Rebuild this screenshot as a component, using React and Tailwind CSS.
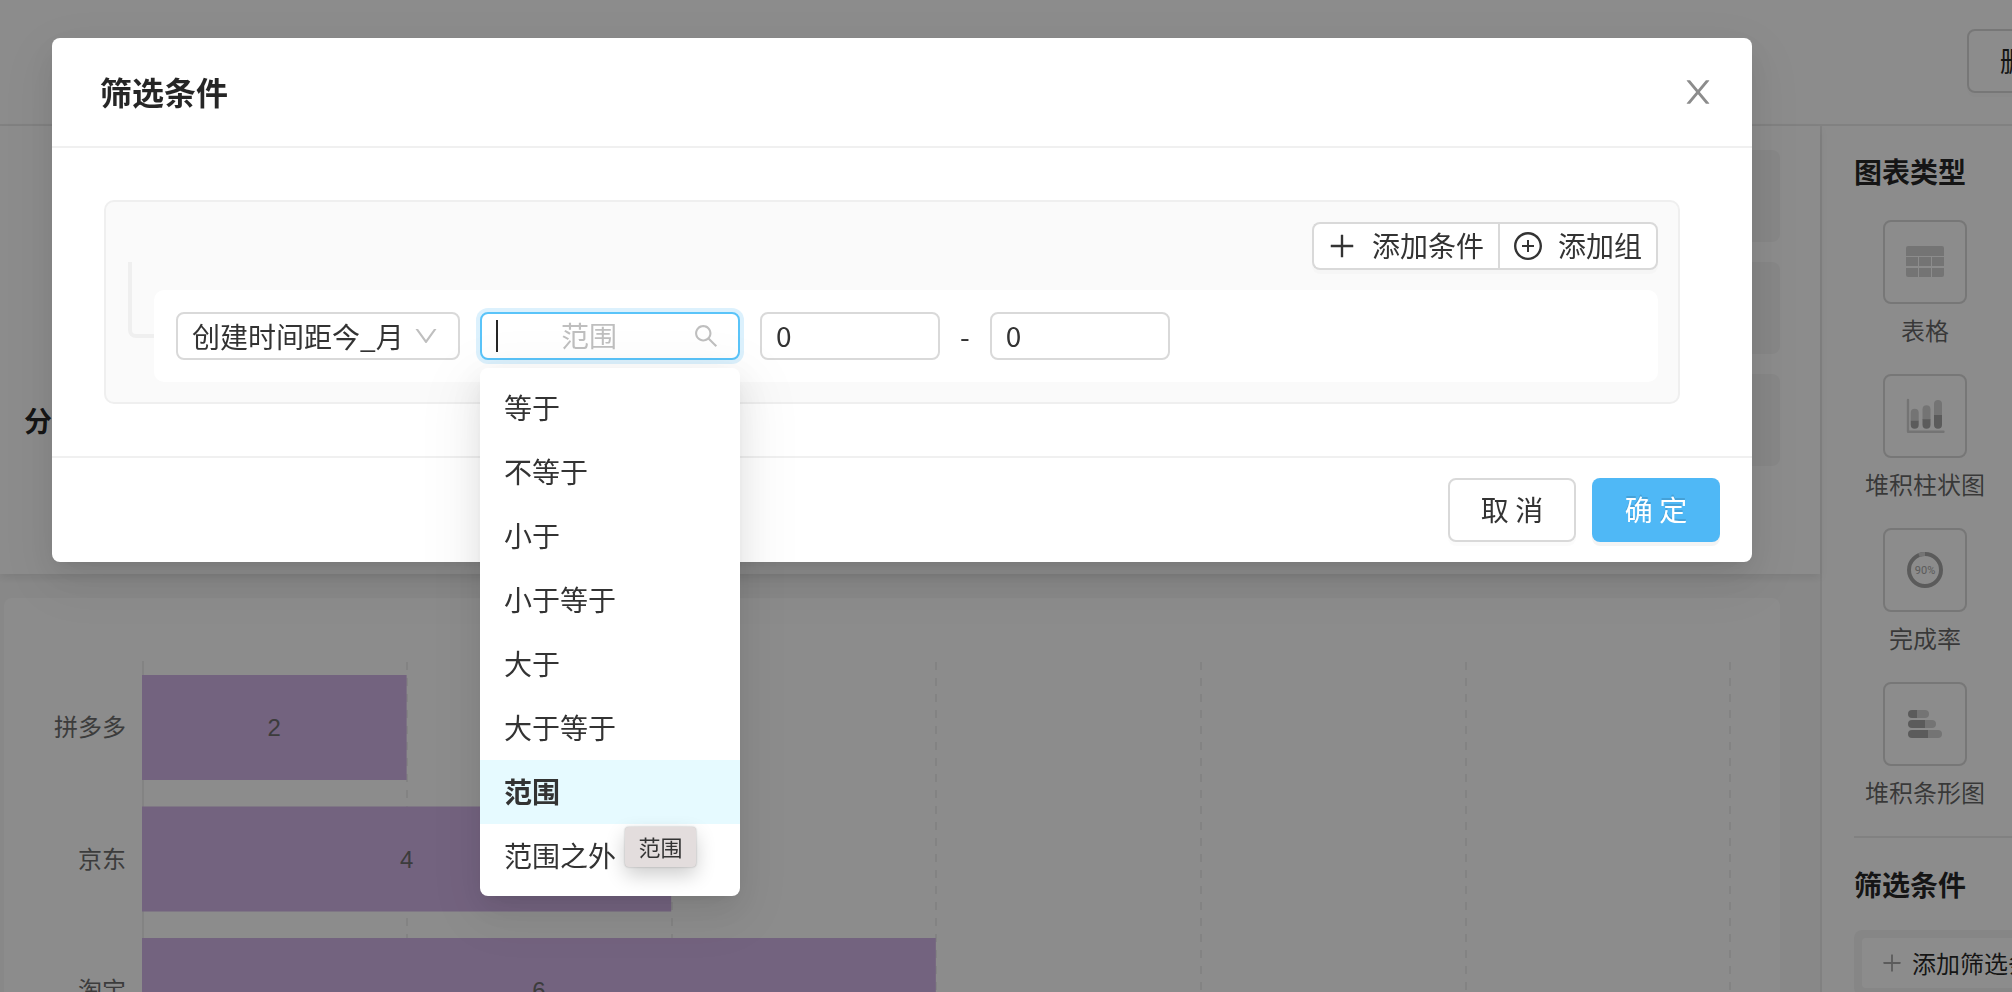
import React, { useState } from "react";
import {
  AiOutlineDown,
  AiOutlinePlus,
  AiOutlinePlusCircle,
  AiOutlineSearch,
} from "react-icons/ai";

const operators = [
  "等于",
  "不等于",
  "小于",
  "小于等于",
  "大于",
  "大于等于",
  "范围",
  "范围之外",
];

const chartData = [
  { name: "拼多多", value: 2 },
  { name: "京东", value: 4 },
  { name: "淘宝", value: 6 },
];

const popupShadow =
  "shadow-[0_6px_12px_-8px_rgba(0,0,0,0.12),0_12px_32px_0_rgba(0,0,0,0.08),0_18px_56px_16px_rgba(0,0,0,0.05)]";

function CloseIcon() {
  return (
    <svg width="32" height="32" viewBox="64 64 896 896" fill="currentColor">
      <path d="M563.8 512l262.5-312.9c4.4-5.2.7-13.1-6.1-13.1h-79.8c-4.7 0-9.2 2.1-12.3 5.7L511.6 449.8 295.1 191.7c-3-3.6-7.5-5.7-12.3-5.7H203c-6.8 0-10.5 7.9-6.1 13.1L459.4 512 196.9 824.9A7.95 7.95 0 0 0 203 838h79.8c4.7 0 9.2-2.1 12.3-5.7l216.5-258.1 216.5 258.1c3 3.6 7.5 5.7 12.3 5.7h79.8c6.8 0 10.5-7.9 6.1-13.1L563.8 512z" />
    </svg>
  );
}

function TableIcon() {
  return (
    <svg width="40" height="40" viewBox="0 0 40 40" fill="#d4d4d4">
      <path d="M3 4h34a2 2 0 0 1 2 2v8H1V6a2 2 0 0 1 2-2z" />
      <path d="M1 15h12v9H1zM14 15h12v9H14zM27 15h12v9H27z" />
      <path d="M1 26h12v9H3a2 2 0 0 1-2-2zM14 26h12v9H14zM27 26h12v7a2 2 0 0 1-2 2H27z" />
    </svg>
  );
}

function StackedColumnIcon() {
  return (
    <svg width="40" height="40" viewBox="0 0 40 40">
      <path
        d="M3 4v31.7h35.5"
        fill="none"
        stroke="#d4d4d4"
        strokeWidth="2.4"
        strokeLinecap="round"
        strokeLinejoin="round"
      />
      <g fill="#d4d4d4">
        <path d="M5.7 25v-8.3a4 4 0 0 1 8 0V25z" />
        <path d="M17.5 24V13.3a4 4 0 0 1 8 0V24z" />
        <path d="M29 19V8a4 4 0 0 1 8 0v11z" />
      </g>
      <g fill="#a6a6a6">
        <path d="M5.7 24.7h8v4a4 4 0 0 1-8 0z" />
        <path d="M17.5 23.3h8v5.4a4 4 0 0 1-8 0z" />
        <path d="M29 19h8v9.7a4 4 0 0 1-8 0z" />
      </g>
    </svg>
  );
}

function RateIcon() {
  return (
    <svg width="40" height="40" viewBox="0 0 40 40">
      <circle cx="20" cy="20" r="16" fill="none" stroke="#a6a6a6" strokeWidth="4" />
      <path d="M14 5.2A16 16 0 0 1 20 4" fill="none" stroke="#d4d4d4" strokeWidth="4" />
      <text
        x="20"
        y="24"
        textAnchor="middle"
        className="fill-[#a6a6a6] font-['Roboto',sans-serif] text-[11px]"
      >
        90%
      </text>
    </svg>
  );
}

function StackedBarIcon() {
  return (
    <svg width="40" height="40" viewBox="0 0 40 40">
      <g fill="#d4d4d4">
        <path d="M12 6h8a4 4 0 0 1 0 8h-8z" />
        <path d="M20 16h7a4 4 0 0 1 0 8h-7z" />
        <path d="M23 26h10a4 4 0 0 1 0 8H23z" />
      </g>
      <g fill="#a6a6a6">
        <path d="M12 6v8H7a4 4 0 0 1 0-8z" />
        <path d="M20 16v8H7a4 4 0 0 1 0-8z" />
        <path d="M23 26v8H7a4 4 0 0 1 0-8z" />
      </g>
    </svg>
  );
}

const chartTypes = [
  { name: "表格", icon: <TableIcon /> },
  { name: "堆积柱状图", icon: <StackedColumnIcon /> },
  { name: "完成率", icon: <RateIcon /> },
  { name: "堆积条形图", icon: <StackedBarIcon /> },
];

function BarChart() {
  const left = 138;
  const step = 264.6;
  return (
    <svg width="1776" height="500" className="block">
      <path d={`M${left + 1} 63V500`} stroke="#efefef" strokeWidth="2" />
      {[1, 2, 3, 4, 5, 6].map((n) => (
        <path
          key={n}
          d={`M${Math.floor(left + n * step) + 1} 64V500`}
          stroke="#efefef"
          strokeWidth="2"
          strokeDasharray="8 8"
        />
      ))}
      {chartData.map((item, index) => {
        const width = (item.value / 2) * step;
        const top = 77 + index * 131.5;
        return (
          <g key={item.name}>
            <rect x={left} y={top} width={width} height="105" fill="#d2b4e8" />
            <text
              x={left - 16}
              y={top + 61}
              textAnchor="end"
              className="fill-[#6e6e6e] text-2xl"
            >
              {item.name}
            </text>
            <text
              x={left + width / 2}
              y={top + 61}
              textAnchor="middle"
              className="fill-[#6e6e6e] font-['Liberation_Sans',sans-serif] text-2xl"
            >
              {item.value}
            </text>
          </g>
        );
      })}
    </svg>
  );
}

function ReportPage() {
  return (
    <div className="h-full flex flex-col bg-white">
      <header className="h-[126px] shrink-0 border-b-2 border-[#ececec] flex items-start pt-[29px]">
        <button className="ml-[calc(100%-45px)] w-32 h-16 shrink-0 border-2 border-[#d9d9d9] rounded-lg text-black/85 pb-0.5 shadow-[0_4px_0_rgba(0,0,0,0.015)]">
          删 除
        </button>
      </header>
      <div className="flex flex-1 min-h-0">
        <main className="w-[calc(100%-192px)] shrink-0 bg-[#f8f8f8] flex flex-col">
          <section className="h-[448px] shrink-0 relative bg-white pt-6 pr-10 pl-6 flex flex-col gap-5 shadow-[0_4px_8px_rgba(0,0,0,0.08)]">
            <div className="ml-32 h-[92px] rounded-lg bg-[#f5f5f5]"></div>
            <div className="ml-32 h-[92px] rounded-lg bg-[#f5f5f5]"></div>
            <div className="flex h-[92px] items-center">
              <h3 className="w-32 font-semibold text-black/85">分</h3>
              <div className="flex-1 h-full rounded-lg bg-[#f5f5f5]"></div>
            </div>
          </section>
          <section className="mt-6 ml-1 mr-10 flex-1 min-h-0 overflow-hidden rounded-t-lg bg-white">
            <BarChart />
          </section>
        </main>
        <aside className="w-[500px] shrink-0 border-l-2 border-[#ececec] pl-8 pt-6">
          <h2 className="h-11 leading-[42px] font-semibold text-black/85">图表类型</h2>
          <ul className="mt-[26px] w-[142px]">
            {chartTypes.map((type) => (
              <li key={type.name} className="mb-6 flex flex-col items-center gap-2">
                <button
                  aria-label={type.name}
                  className="w-[84px] h-[84px] border-2 border-[#d9d9d9] rounded-lg flex items-center justify-center"
                >
                  {type.icon}
                </button>
                <span className="h-[38px] leading-[35px] text-2xl whitespace-nowrap text-black/60">
                  {type.name}
                </span>
              </li>
            ))}
          </ul>
          <hr className="border-0 h-0.5 bg-[#ececec]" />
          <h2 className="mt-6 h-11 leading-[44px] font-semibold text-black/85">筛选条件</h2>
          <div className="mt-6 rounded-lg bg-[#f5f5f5] p-2">
            <button className="w-full h-[50px] bg-white rounded pl-[18px] flex items-center gap-2 text-2xl text-black/85">
              <AiOutlinePlus size={24} className="text-[#a6a6a6]" />
              添加筛选条件
            </button>
          </div>
        </aside>
      </div>
    </div>
  );
}

function OperatorSelect() {
  const [selected, setSelected] = useState("范围");

  return (
    <div className="relative w-[260px]">
      <div className="h-12 border-2 border-[#5ac4f9] rounded-lg bg-white pl-3.5 pr-[18px] flex items-center shadow-[0_0_0_4px_rgba(79,184,246,0.2)]">
        <span className="w-0.5 h-8 bg-black/85"></span>
        <input
          aria-label="条件"
          placeholder={selected}
          className="flex-1 min-w-0 h-full pb-0.5 mr-3 text-center outline-none caret-transparent placeholder:text-[#bfbfbf]"
        />
        <AiOutlineSearch size={28} className="text-[#bfbfbf]" />
      </div>
      <ul
        role="listbox"
        className={`absolute z-10 left-0 top-14 w-full py-2 rounded-lg bg-white ${popupShadow}`}
      >
        {operators.map((name) => (
          <li
            key={name}
            role="option"
            aria-selected={name === selected}
            onClick={() => setSelected(name)}
            className={`h-16 leading-[62px] px-6 cursor-pointer ${
              name === selected ? "bg-[#e6faff] font-semibold" : ""
            }`}
          >
            {name}
          </li>
        ))}
      </ul>
      <div
        role="tooltip"
        className="absolute z-20 left-[145px] top-[515px] w-[71px] h-10 leading-[38px] text-center text-[22px] bg-[#e3dddd] rounded-sm shadow-[0_0_2px_rgba(0,0,0,0.3),0_8px_20px_rgba(0,0,0,0.2)]"
      >
        范围
      </div>
    </div>
  );
}

function FilterModal() {
  return (
    <div
      role="dialog"
      aria-label="筛选条件"
      className={`w-full rounded-lg bg-white ${popupShadow}`}
    >
      <div className="h-[110px] border-b-2 border-[#f0f0f0] pl-12 pr-[38px] flex items-center justify-between">
        <h1 className="pb-0.5 text-[32px] font-semibold text-black/85">筛选条件</h1>
        <button aria-label="关闭" className="text-[#8c8c8c]">
          <CloseIcon />
        </button>
      </div>

      <div className="py-[52px] pl-[52px] pr-[72px]">
        <div className="border-2 border-[#efefef] rounded-[10px] bg-[#fafafa] p-5">
          <div className="flex justify-end">
            <button className="h-12 border-2 border-r-0 border-[#d9d9d9] rounded-l-lg bg-white pl-3 pr-3.5 flex items-center gap-3.5 shadow-[0_4px_0_rgba(0,0,0,0.015)]">
              <AiOutlinePlus size={32} />
              <span className="pb-0.5">添加条件</span>
            </button>
            <button className="h-12 border-2 border-[#d9d9d9] rounded-r-lg bg-white pl-3 pr-3.5 flex items-center gap-3.5 shadow-[0_4px_0_rgba(0,0,0,0.015)]">
              <AiOutlinePlusCircle size={32} />
              <span className="pb-0.5">添加组</span>
            </button>
          </div>

          <div className="mt-5 flex items-start">
            <div className="ml-0.5 -mt-7 w-[26px] h-[76px] border-l-4 border-b-4 border-[#efefef] rounded-bl-lg"></div>
            <div className="flex-1 rounded-[10px] bg-white p-[22px] flex items-center gap-5">
              <div className="relative w-[284px]">
                <select
                  aria-label="字段"
                  className="w-full h-12 appearance-none border-2 border-[#d9d9d9] rounded-lg bg-white pl-3.5 pr-14 pb-0.5 outline-none"
                >
                  <option>创建时间距今_月</option>
                </select>
                <AiOutlineDown
                  size={28}
                  className="absolute right-5 top-2.5 text-[#bfbfbf] pointer-events-none"
                />
              </div>
              <OperatorSelect />
              <input
                aria-label="最小值"
                defaultValue="0"
                className="w-[180px] h-12 border-2 border-[#d9d9d9] rounded-lg px-3.5 pb-0.5 outline-none"
              />
              <span>-</span>
              <input
                aria-label="最大值"
                defaultValue="0"
                className="w-[180px] h-12 border-2 border-[#d9d9d9] rounded-lg px-3.5 pb-0.5 outline-none"
              />
            </div>
          </div>
        </div>
      </div>

      <div className="border-t-2 border-[#f0f0f0] py-5 px-8 flex justify-end gap-4">
        <button className="w-32 h-16 pb-0.5 border-2 border-[#d9d9d9] rounded-lg bg-white shadow-[0_4px_0_rgba(0,0,0,0.015)]">
          取 消
        </button>
        <button className="w-32 h-16 pb-0.5 rounded-lg bg-[#4fb8f6] text-white text-shadow-[0_-2px_0_rgba(0,0,0,0.12)] shadow-[0_4px_0_rgba(0,0,0,0.045)]">
          确 定
        </button>
      </div>
    </div>
  );
}

function App() {
  return (
    <div className="relative h-screen overflow-hidden font-['Noto_Sans_CJK_SC',sans-serif] text-[28px] leading-[44px] text-[#333]">
      <ReportPage />
      <div className="fixed inset-0 z-10 bg-black/45 pt-[38px] pl-[52px] pr-[260px]">
        <FilterModal />
      </div>
    </div>
  );
}

export default App;
